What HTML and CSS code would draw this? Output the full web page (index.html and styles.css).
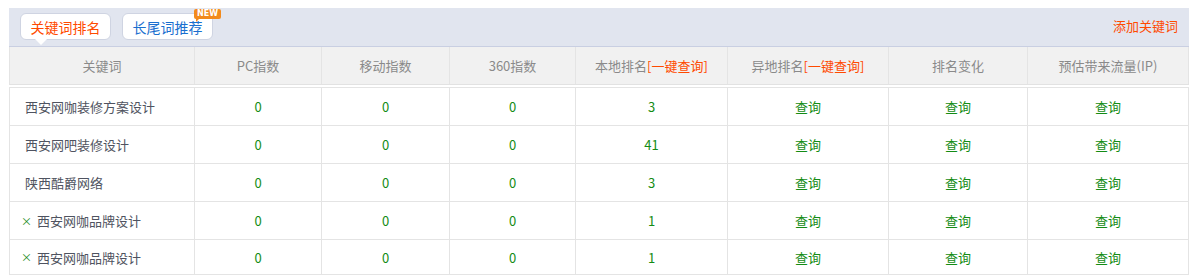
FILE: index.html
```html
<!DOCTYPE html>
<html lang="zh-CN">
<head>
<meta charset="utf-8">
<title>关键词排名</title>
<link rel="stylesheet" href="styles.css">
</head>
<body>
<div class="panel">
  <div class="topbar">
    <div class="tabs">
      <span class="tab tab-active">关键词排名<i class="pointer"></i></span>
      <span class="tab tab-blue">长尾词推荐<span class="badge">NEW</span></span>
    </div>
    <a class="add-link">添加关键词</a>
  </div>
  <div class="grid head">
    <div class="cell">关键词</div>
    <div class="cell">PC指数</div>
    <div class="cell">移动指数</div>
    <div class="cell">360指数</div>
    <div class="cell">本地排名<span class="red">[一键查询]</span></div>
    <div class="cell">异地排名<span class="red">[一键查询]</span></div>
    <div class="cell">排名变化</div>
    <div class="cell">预估带来流量(IP)</div>
  </div>
  <div class="body">
    <div class="grid row">
      <div class="cell kw">西安网咖装修方案设计</div>
      <div class="cell num">0</div><div class="cell num">0</div><div class="cell num">0</div>
      <div class="cell num">3</div>
      <div class="cell num">查询</div><div class="cell num">查询</div><div class="cell num">查询</div>
    </div>
    <div class="grid row">
      <div class="cell kw">西安网吧装修设计</div>
      <div class="cell num">0</div><div class="cell num">0</div><div class="cell num">0</div>
      <div class="cell num">41</div>
      <div class="cell num">查询</div><div class="cell num">查询</div><div class="cell num">查询</div>
    </div>
    <div class="grid row">
      <div class="cell kw">陕西酷爵网络</div>
      <div class="cell num">0</div><div class="cell num">0</div><div class="cell num">0</div>
      <div class="cell num">3</div>
      <div class="cell num">查询</div><div class="cell num">查询</div><div class="cell num">查询</div>
    </div>
    <div class="grid row">
      <div class="cell kw kw-x"><span class="x">×</span>西安网咖品牌设计</div>
      <div class="cell num">0</div><div class="cell num">0</div><div class="cell num">0</div>
      <div class="cell num">1</div>
      <div class="cell num">查询</div><div class="cell num">查询</div><div class="cell num">查询</div>
    </div>
    <div class="grid row last">
      <div class="cell kw kw-x"><span class="x">×</span>西安网咖品牌设计</div>
      <div class="cell num">0</div><div class="cell num">0</div><div class="cell num">0</div>
      <div class="cell num">1</div>
      <div class="cell num">查询</div><div class="cell num">查询</div><div class="cell num">查询</div>
    </div>
  </div>
</div>
</body>
</html>
```
FILE: styles.css
```css
* { box-sizing: border-box; }
html, body { margin: 0; padding: 0; background: #fff; }
body {
  font-family: "Noto Sans CJK SC", "Noto Sans", sans-serif;
  font-size: 13px;
  color: #555;
}
.panel {
  width: 1180px;
  margin: 8px 0 0 9px;
}
.topbar {
  height: 39px;
  background: #e1e5ef;
  border-bottom: 1px solid #c9cfe2;
  display: flex;
  align-items: flex-start;
  justify-content: space-between;
  padding: 5px 11px 0 11px;
}
.tabs { display: flex; gap: 11px; }
.tab {
  position: relative;
  display: flex;
  align-items: center;
  justify-content: center;
  width: 91px;
  height: 27px;
  background: #fff;
  border: 1px solid #cfd4e2;
  border-radius: 6px;
  font-size: 14px;
  line-height: 1;
}
.tab-active { color: #ff4a00; }
.tab-blue { color: #1a6fcf; }
.pointer {
  position: absolute;
  left: 14px;
  bottom: -6px;
  width: 0;
  height: 0;
  border-left: 6px solid transparent;
  border-right: 6px solid transparent;
  border-top: 6px solid #fff;
}
.badge {
  position: absolute;
  right: -9px;
  top: -5px;
  background: #f28a1c;
  color: #fff;
  font-family: "DejaVu Sans", sans-serif;
  font-size: 8px;
  font-weight: bold;
  line-height: 10px;
  padding: 0 3px;
  border-radius: 2px;
  letter-spacing: 0;
}
.badge::after {
  content: "";
  position: absolute;
  left: 2px;
  bottom: -3px;
  border-left: 3px solid #f28a1c;
  border-bottom: 3px solid transparent;
}
.add-link {
  color: #ff4a00;
  font-size: 13px;
  margin-top: 6px;
  line-height: 1;
  cursor: pointer;
}
.grid {
  display: grid;
  grid-template-columns: 185px 127px 128px 126px 152px 161px 139px 161px;
  border-left: 1px solid #e4e4e4;
}
.cell {
  border-right: 1px solid #e4e4e4;
  display: flex;
  align-items: center;
  justify-content: center;
  white-space: nowrap;
}
.head {
  background: #f1f1f1;
  height: 38px;
  border-bottom: 1px solid #e2e2e2;
  color: #8a8a8a;
  font-size: 13px;
}
.red { color: #ff4a00; }
.body {
  margin-top: 2px;
  border-top: 1px solid #e4e4e4;
}
.row {
  height: 38px;
  border-bottom: 1px solid #e4e4e4;
}
.row.last { height: 35px; }
.kw {
  justify-content: flex-start;
  padding-left: 15px;
  color: #4f5360;
}
.kw-x { padding-left: 11px; }
.x {
  color: #1a8c1a;
  font-size: 11px;
  margin-right: 5px;
}
.num { color: #148c14; }
```
